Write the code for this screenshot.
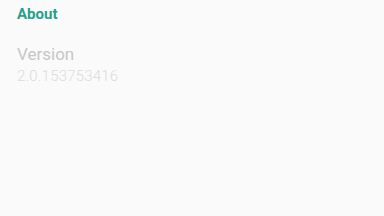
import React from 'react';

const App: React.FC = () => {
  return (
    <div className="w-[384px] h-[216px] bg-[#fafafa] font-['Roboto',sans-serif] overflow-hidden">
      {/* Section header */}
      <div className="pl-[17px] pt-[4px] text-[15px] font-bold text-[#26a08c] leading-[20px]">About</div>

      {/* Version preference */}
      <div className="pl-[17px] pt-[20px]">
        <div className="text-[17px] text-[#c6c6c6] leading-[21px]">Version</div>
        <div className="mt-[1px] text-[15px] font-light tracking-[0.2px] text-[#dcdcdc] leading-[20px]">2.0.153753416</div>
      </div>
    </div>
  );
};

export default App;
